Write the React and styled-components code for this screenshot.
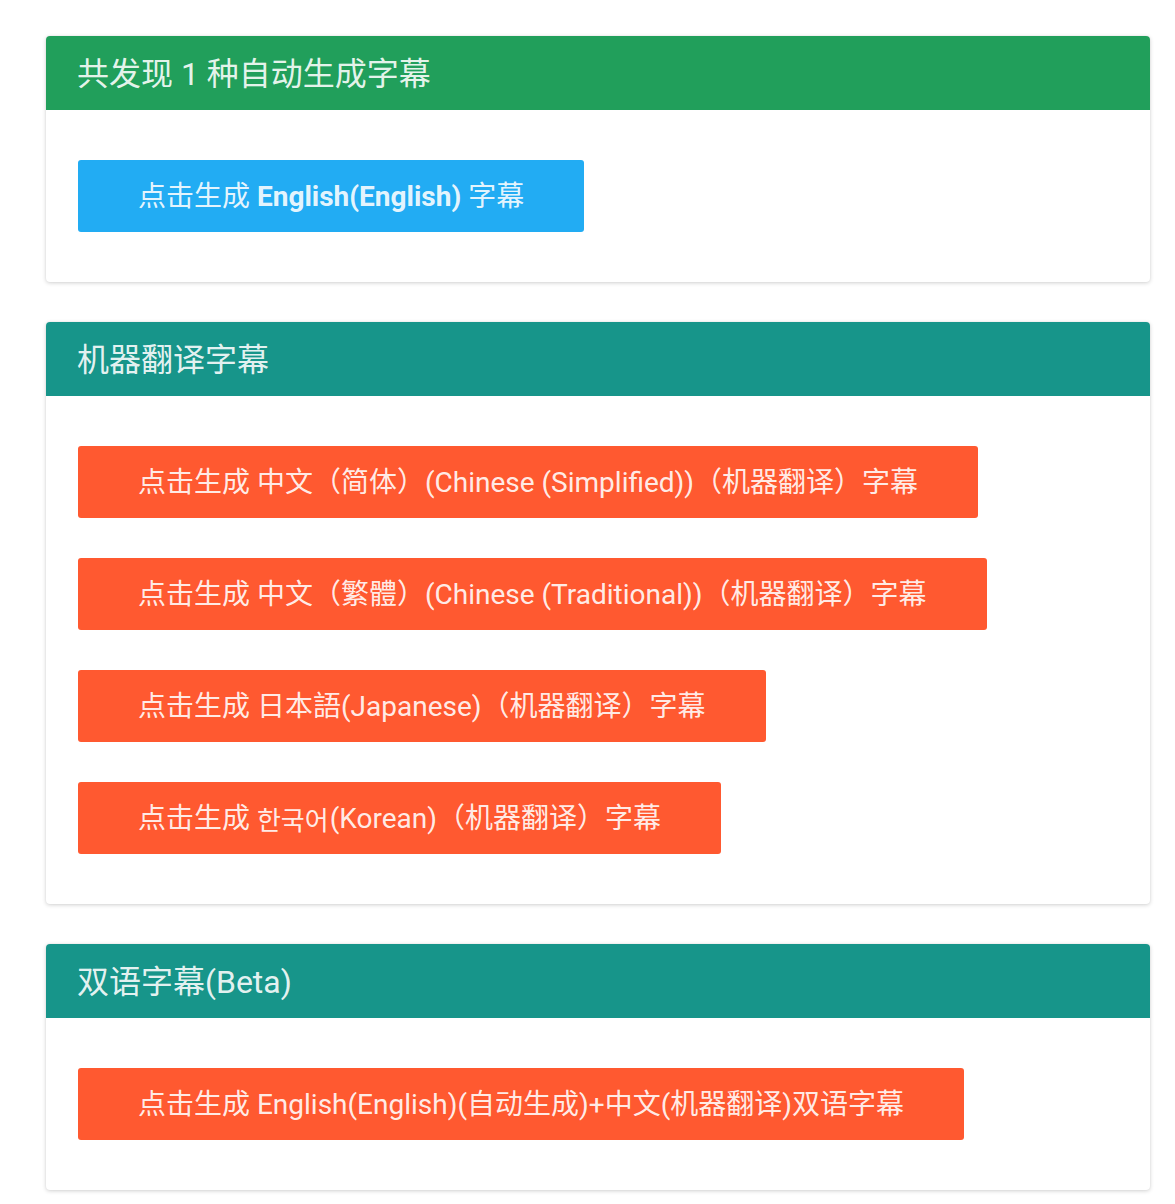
import React from "react";
import styled, { createGlobalStyle } from "styled-components";

const Global = createGlobalStyle`
  html, body {
    margin: 0;
    padding: 0;
    background: #ffffff;
  }
  body {
    font-family: Roboto, "Noto Sans CJK SC", "Noto Sans", sans-serif;
  }
`;

const Page = styled.div`
  padding: 36px 25px 14px 46px;
  display: flex;
  flex-direction: column;
  gap: 40px;
`;

const Card = styled.section`
  background: #ffffff;
  border-radius: 4px;
  box-shadow: 0 1px 4px rgba(0, 0, 0, 0.18), 0 0 2px rgba(0, 0, 0, 0.06);
  overflow: hidden;
`;

const Header = styled.div`
  height: 74px;
  display: flex;
  align-items: center;
  padding: 2px 31px 0;
  box-sizing: border-box;
  background: ${(p) => p.$bg};
  color: rgba(255, 255, 255, 0.9);
  font-size: 32px;
  font-weight: 400;
  line-height: 1;
`;

const Body = styled.div`
  padding: 50px 32px;
  display: flex;
  flex-direction: column;
  align-items: flex-start;
  gap: 40px;
`;

const Button = styled.button`
  height: 72px;
  padding: 2px 60px 0 60px;
  box-sizing: border-box;
  border: none;
  border-radius: 3px;
  background: ${(p) => p.$bg};
  color: rgba(255, 255, 255, 0.9);
  font-family: Roboto, "Noto Sans CJK SC", "Noto Sans", sans-serif;
  font-size: 28px;
  font-weight: 400;
  line-height: 1;
  white-space: nowrap;
  cursor: pointer;
  display: flex;
  align-items: center;
`;

const Strong = styled.b`
  font-weight: 700;
`;

const Hangul = styled.span`
  font-family: "Noto Sans CJK KR", sans-serif;
  font-size: 26px;
  margin-right: 1px;
`;

const GREEN = "#219f5b";
const TEAL = "#17958a";
const BLUE = "#22acf3";
const ORANGE = "#ff5930";

export default function App() {
  return (
    <>
      <Global />
      <Page>
        <Card>
          <Header $bg={GREEN}>共发现 1 种自动生成字幕</Header>
          <Body>
            <Button $bg={BLUE}>
              点击生成&nbsp;<Strong>English(English)</Strong>&nbsp;字幕
            </Button>
          </Body>
        </Card>
        <Card>
          <Header $bg={TEAL}>机器翻译字幕</Header>
          <Body>
            <Button $bg={ORANGE}>点击生成 中文（简体）(Chinese (Simplified))（机器翻译）字幕</Button>
            <Button $bg={ORANGE}>点击生成 中文（繁體）(Chinese (Traditional))（机器翻译）字幕</Button>
            <Button $bg={ORANGE}>点击生成 日本語(Japanese)（机器翻译）字幕</Button>
            <Button $bg={ORANGE}>
              点击生成&nbsp;<Hangul>한국어</Hangul>(Korean)（机器翻译）字幕
            </Button>
          </Body>
        </Card>
        <Card>
          <Header $bg={TEAL}>双语字幕(Beta)</Header>
          <Body>
            <Button $bg={ORANGE}>点击生成 English(English)(自动生成)+中文(机器翻译)双语字幕</Button>
          </Body>
        </Card>
      </Page>
    </>
  );
}
